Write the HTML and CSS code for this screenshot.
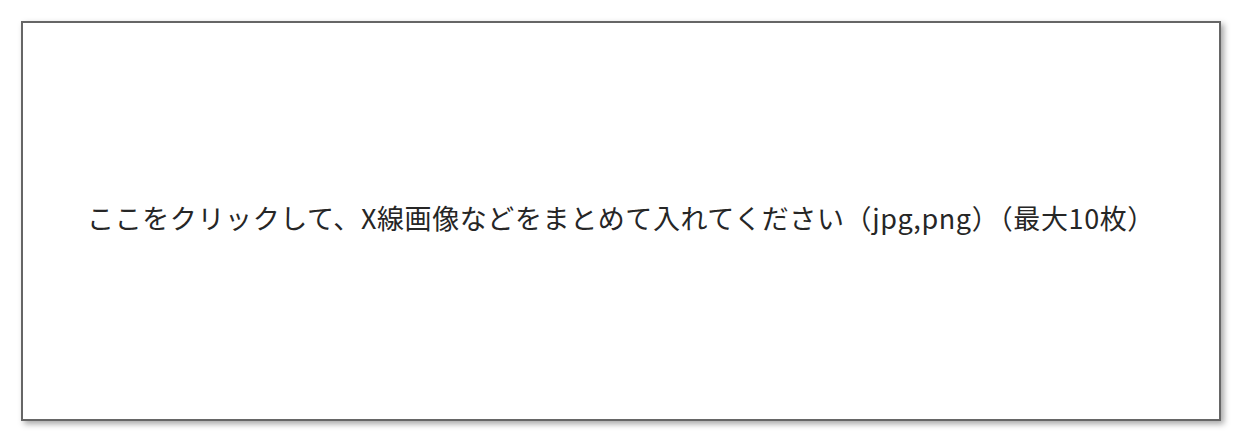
FILE: index.html
```html
<!DOCTYPE html>
<html lang="ja">
<head>
  <meta charset="UTF-8">
  <title>アップロード</title>
  <link rel="stylesheet" href="styles.css">
</head>
<body>
  <div class="drop-zone">
    <p class="drop-text">ここをクリックして、X線画像などをまとめて入れてください（jpg,png）（最大10枚）</p>
  </div>
</body>
</html>
```

FILE: styles.css
```css
body {
  margin: 0;
  padding: 21px;
  background-color: #fff;
  font-family: "Noto Sans CJK JP", "Noto Sans", sans-serif;
}

.drop-zone {
  width: 1200px;
  height: 400px;
  box-sizing: border-box;
  border: 2px solid #666;
  box-shadow: 3px 3px 6px rgba(0,0,0,0.35);
  display: flex;
  align-items: center;
  justify-content: center;
  cursor: pointer;
}

.drop-text {
  margin: 0 0 6px;
  font-size: 27px;
  line-height: 1.3;
  color: #262626;
  letter-spacing: 0.6px;
}
```
